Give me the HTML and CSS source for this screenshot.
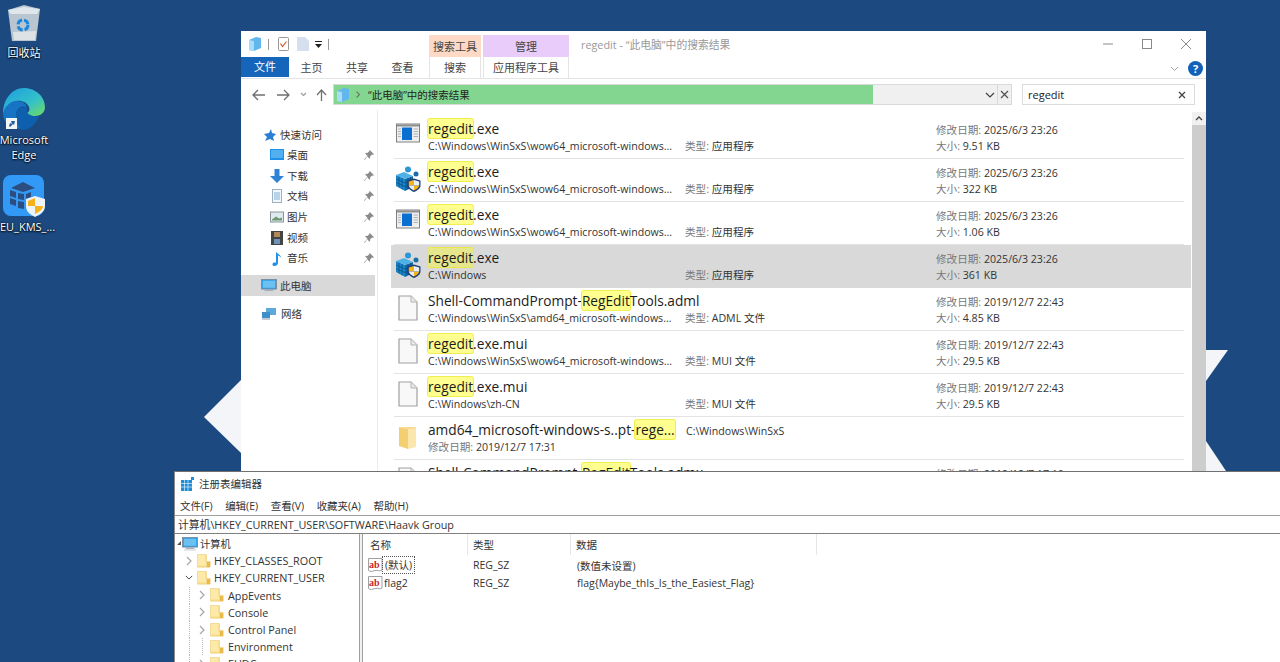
FILE: index.html
```html
<!DOCTYPE html>
<html lang="zh-CN">
<head>
<meta charset="utf-8">
<title>regedit</title>
<link rel="stylesheet" href="styles.css">
</head>
<body>
<svg width="0" height="0" class="defs">
  <defs>
    <symbol id="i-exe" viewBox="0 0 24 20"><rect x=".5" y="1" width="23" height="18" fill="#efefef" stroke="#808080"/><rect x="1" y="1.500" width="22" height="2" fill="#8f8f8f"/><rect x="6" y="4.500" width="10" height="12.500" fill="#0a6fd0"/><path d="M2 6h3M2 8.500h3M2 11h3M2 13.500h3M17.500 6h4.500M17.500 8.500h4.500M17.500 11h4.500M17.500 13.500h4.500" stroke="#a9b3bd"/></symbol>
    <symbol id="i-reg" viewBox="0 0 26 26"><path d="M1 9l9 4v12l-9-5z" fill="#1a85c8"/><path d="M10 13l8-3v11l-8 4z" fill="#1266a6"/><path d="M1 9l8-3 9 4-8 3z" fill="#4fb0e6"/><path d="M1 13l9 4 8-3M1 16.500l9 4 8-3M4 10.500v11M7 12v11M13 12v11M15.500 11v11" fill="none" stroke="#0b4a7c" stroke-width=".7"/><circle cx="13" cy="3.500" r="3" fill="#2a95d8"/><circle cx="21" cy="8" r="2.500" fill="#1a6ea8"/><path d="M19 12.500l6.500 2v5c0 3-3 5-6.500 6.500-3.500-1.500-6.500-3.500-6.500-6.500v-5z" fill="#1c3f78"/><path d="M19 14v5.500h-5.200v-4zM19 19.500h5.200c-.3 2.300-2.800 3.800-5.200 5z" fill="#f6b21a"/><path d="M19 14l5.200 1.500v4H19zM19 19.500v5c-2.400-1.200-4.900-2.700-5.200-5z" fill="#e8eef4"/></symbol>
    <symbol id="i-doc" viewBox="0 0 20 26"><path d="M1 1h12l6 6v18H1z" fill="#f8f8f8" stroke="#a0a0a0" stroke-width="1.200"/><path d="M13 1v6h6" fill="#e8e8e8" stroke="#b4b4b4"/></symbol>
    <symbol id="i-folder" viewBox="0 0 20 26"><path d="M1 3l9 2v20l-9-3z" fill="#f4cf72"/><path d="M10 3h8v20l-8 2z" fill="#fbe6ad"/><path d="M1 3h16l1 1-8 1z" fill="#f7d98d"/></symbol>
    <symbol id="i-yellow" viewBox="0 0 16 16"><path d="M1 1h10v14H1z" fill="#fbe08d"/><path d="M1 1h9v12H1z" fill="#fdeaa8"/><path d="M11 9h4v6h-4z" fill="#e9b949"/><path d="M.5 .5h10v8h4.500v6.500H.5z" fill="none" stroke="#e9c25f" stroke-width=".7"/></symbol>
    <symbol id="i-pc" viewBox="0 0 18 16"><rect x=".5" y=".5" width="17" height="11" fill="#2d9ee8" stroke="#7a8a99"/><rect x="2" y="2" width="14" height="8" fill="#6cc1f2"/><path d="M4 12h10v1.500H4z" fill="#9aa6b2"/><path d="M2 14h14v1.500H2z" fill="#d2d8dd"/></symbol>
    <symbol id="i-pin" viewBox="0 0 10 10"><path d="M6 0l4 4-1 .5-1-.3-2 2 .2 1.500-.7.700L3.200 6 .8 9.500 0 9.200 3.400 5.400 1.200 3.200 2 2.500l1.500.2 2-2-.3-1z" fill="#8a8a8a" transform="translate(0 .3)"/></symbol>
    <symbol id="i-ab" viewBox="0 0 16 16"><path d="M1.500 1.500h13.500v11.500c-2.500 2-4-.5-7 .5-3 1-4.500 1.500-6.500 0z" fill="#fff" stroke="#a0a0a0"/><text x="2" y="10.500" class="ab-text">ab</text></symbol>
    <symbol id="i-chev" viewBox="0 0 8 10"><path d="M2 1l4 4-4 4" fill="none" stroke="#a6a6a6" stroke-width="1.200"/></symbol>
    <symbol id="i-chev-d" viewBox="0 0 10 8"><path d="M1 2l4 4 4-4" fill="none" stroke="#404040" stroke-width="1.200"/></symbol>
  </defs>
</svg>

<div class="desktop">
  <svg class="wallpaper" viewBox="0 0 1280 662" width="1280" height="662"><path d="M204 417 241 380V453Z" fill="#f3f5f8"/><path d="M1206 350H1228L1206 381Z" fill="#f3f5f8"/><path d="M1206 441 1226 471H1206Z" fill="#f3f5f8"/></svg>

  <div class="desk-icon bin">
    <svg width="34" height="38" viewBox="0 0 34 38"><path d="M1 6 17 1l16 4-4 32H5z" fill="#b9c5cf"/><path d="M1 6l16-3 16 2-3 5H4z" fill="#dfe6ec"/><path d="M6 28l23-1-1 9H7z" fill="#dde2e6"/><circle cx="16" cy="21" r="5" fill="none" stroke="#1b88e0" stroke-width="3" stroke-dasharray="6 2"/></svg>
    <span>回收站</span>
  </div>
  <div class="desk-icon edge">
    <svg width="42" height="42" viewBox="0 0 42 42"><defs><linearGradient id="eg" x1="0" y1="0" x2="1" y2="1"><stop offset="0" stop-color="#1b9de2"/><stop offset=".6" stop-color="#35c1c8"/><stop offset="1" stop-color="#73dc5c"/></linearGradient></defs><path d="M21 0c12 0 21 9 21 19 0 6-5 9-10 9-5 0-8-2-8-3 2-1 3-3 2-6-2-5-8-7-13-6C7 14 2 20 0 26 0 11 9 0 21 0z" fill="url(#eg)"/><path d="M0 26c1-7 7-13 14-13 6 0 9 3 10 6-5-2-11 1-11 8 0 6 4 11 11 14C10 42 0 36 0 26z" fill="#1773c4"/><path d="M13 27c0-5 4-8 9-8 2 0 3 2 2 5 2 4 7 5 12 4-3 8-9 14-17 14-4-3-6-9-6-15z" fill="#0e5fae"/><rect x="3" y="30" width="11" height="11" fill="#f5f5f5"/><path d="M6 38l1-3 2 1-1-3h4l-1 4-1-1-3 3z" fill="#1f5f9c"/></svg>
    <span>Microsoft<br>Edge</span>
  </div>
  <div class="desk-icon kms">
    <svg width="42" height="42" viewBox="0 0 42 42"><rect width="41" height="41" rx="8" fill="#3399f7"/><g fill="#2c4d80"><path d="M8 13l12-6 12 6-12 4z"/><path d="M7 15l6 2v6l-6-2zM15 18l6 1v6l-6-1zM7 23l6 2v6l-6-2zM15 26l6 1v7l-6-1zM23 19l5-2v5l-5 2z"/></g><path d="M32 21l10 3v7c0 5-4 8-10 11-6-3-9-6-9-11v-7z" fill="#eef3f7"/><path d="M32 23v8h-7v-5zM32 31h8c-.5 4-4 6-8 8z" fill="#f6b21a"/></svg>
    <span>EU_KMS_...</span>
  </div>

  <section class="explorer">
    <header class="ex-title">
      <div class="qat">
        <svg width="12" height="14" viewBox="0 0 12 14"><path d="M0 3l7-3 5 1v10l-7 3-5-1z" fill="#61b6ee"/><path d="M0 3l5 1v10l-5-1z" fill="#a8dcf8"/></svg>
        <i class="qat-sep first"></i>
        <svg width="11" height="14" viewBox="0 0 11 14"><rect x=".5" y=".5" width="10" height="13" rx="1" fill="#fff" stroke="#999"/><path d="M2.500 6.500l2 3 4-5" fill="none" stroke="#d9552b" stroke-width="1.200"/></svg>
        <svg class="qat-doc" width="12" height="14" viewBox="0 0 12 14"><path d="M0 0h8l4 4v10H0z" fill="#d4e0ee"/></svg>
        <svg class="qat-arrow" width="7" height="7" viewBox="0 0 7 7"><path d="M0 0h7v1H0zM0 3h7L3.500 7z" fill="#222"/></svg>
        <i class="qat-sep last"></i>
      </div>
      <div class="ctx-heads">
        <div class="ctx search">搜索工具</div>
        <div class="ctx manage">管理</div>
      </div>
      <div class="win-title">regedit - “此电脑”中的搜索结果</div>
      <div class="win-btns">
        <svg width="10" height="10" viewBox="0 0 10 10"><path d="M0 5h10" stroke="#888" fill="none"/></svg>
        <svg width="10" height="10" viewBox="0 0 10 10"><rect x=".5" y=".5" width="9" height="9" fill="none" stroke="#888"/></svg>
        <svg width="10" height="10" viewBox="0 0 10 10"><path d="M0 0l10 10M10 0 0 10" stroke="#888" fill="none"/></svg>
      </div>
    </header>
    <nav class="ex-tabs">
      <div class="tab file">文件</div>
      <div class="tab t-home">主页</div>
      <div class="tab t-share">共享</div>
      <div class="tab t-view">查看</div>
      <div class="tab t-search">搜索</div>
      <div class="tab t-app">应用程序工具</div>
      <div class="tab-end">
        <svg width="9" height="6" viewBox="0 0 9 6"><path d="M1 1l3.500 3.500L8 1" fill="none" stroke="#aaa"/></svg>
        <span class="help">?</span>
      </div>
    </nav>
    <div class="ex-addr">
      <div class="nav-btns">
        <svg width="13" height="12" viewBox="0 0 13 12"><path d="M6 1 1 6l5 5M1 6h12" fill="none" stroke="#707070" stroke-width="1.300"/></svg>
        <svg width="13" height="12" viewBox="0 0 13 12"><path d="M7 1l5 5-5 5M12 6H0" fill="none" stroke="#707070" stroke-width="1.300"/></svg>
        <svg width="7" height="5" viewBox="0 0 7 5"><path d="M1 1l2.500 2.500L6 1" fill="none" stroke="#999" stroke-width="1.100"/></svg>
        <svg width="11" height="12" viewBox="0 0 11 12"><path d="M1 6l4.500-5L10 6M5.500 1v11" fill="none" stroke="#707070" stroke-width="1.300"/></svg>
      </div>
      <div class="addr-box">
        <div class="addr-progress">
          <svg width="14" height="14" viewBox="0 0 12 14"><path d="M0 3l7-3 5 1v10l-7 3-5-1z" fill="#61b6ee"/><path d="M0 3l5 1v10l-5-1z" fill="#a8dcf8"/></svg>
          <svg class="addr-chev" width="6" height="7" viewBox="0 0 8 10"><path d="M2 1l4 4-4 4" fill="none" stroke="#666" stroke-width="1.500"/></svg>
          <span>“此电脑”中的搜索结果</span>
        </div>
        <div class="addr-drop"><svg width="10" height="8" viewBox="0 0 10 8"><use href="#i-chev-d"/></svg></div>
      </div>
      <div class="addr-x"><svg width="9" height="9" viewBox="0 0 9 9"><path d="M1 1l7 7M8 1 1 8" stroke="#555" stroke-width="1.300" fill="none"/></svg></div>
      <div class="search-box"><span>regedit</span><svg width="8" height="8" viewBox="0 0 8 8"><path d="M1 1l6 6M7 1 1 7" stroke="#444" stroke-width="1.300" fill="none"/></svg></div>
    </div>

    <div class="ex-body">
      <aside class="side">
        <div class="side-item head quick"><svg width="12" height="12" viewBox="0 0 12 12"><path d="M7 0 8 4l4 1-3 3 1 4-4-2-5 2 2-4-3-3 5-1z" fill="#2a7fd5"/></svg><span>快速访问</span></div>
        <div class="side-item sub"><svg width="14" height="12" viewBox="0 0 14 12"><rect width="14" height="11" fill="#1e90e8"/><rect x="1" y="1" width="12" height="8" fill="#53b0f0"/></svg><span>桌面</span><svg class="pin" width="10" height="10"><use href="#i-pin"/></svg></div>
        <div class="side-item sub"><svg width="14" height="14" viewBox="0 0 14 14"><path d="M4.500 0h5v7H14l-7 7-7-7h4.500z" fill="#2f83d6"/></svg><span>下载</span><svg class="pin" width="10" height="10"><use href="#i-pin"/></svg></div>
        <div class="side-item sub"><svg width="14" height="14" viewBox="0 0 10 14"><rect x=".5" y=".5" width="9" height="13" fill="#f4f7fa" stroke="#9fb0c0"/><path d="M2 4h6M2 6h6M2 8h6M2 10h6" stroke="#7cb1de"/></svg><span>文档</span><svg class="pin" width="10" height="10"><use href="#i-pin"/></svg></div>
        <div class="side-item sub"><svg width="14" height="12" viewBox="0 0 14 11"><rect x=".5" y=".5" width="13" height="10" fill="#dfe9ee" stroke="#8a949c"/><path d="M2 8l4-3 3 2 3-1v3H2z" fill="#6e9a70"/></svg><span>图片</span><svg class="pin" width="10" height="10"><use href="#i-pin"/></svg></div>
        <div class="side-item sub"><svg width="14" height="14" viewBox="0 0 12 14"><rect width="12" height="14" fill="#444"/><rect x="3" y="1" width="6" height="5" fill="#b08a5a"/><rect x="3" y="8" width="6" height="5" fill="#6d93b8"/></svg><span>视频</span><svg class="pin" width="10" height="10"><use href="#i-pin"/></svg></div>
        <div class="side-item sub"><svg width="14" height="15" viewBox="0 0 10 15"><path d="M4 0c0 3 5 3 5 7-1-2-2-2-3-2.500V12c0 2-2 3-4 3s-2-3 0-3.500c.8-.2 1.500 0 2 .2z" fill="#1e90e8"/></svg><span>音乐</span><svg class="pin" width="10" height="10"><use href="#i-pin"/></svg></div>
        <div class="side-item head pc"><svg width="16" height="14"><use href="#i-pc"/></svg><span>此电脑</span></div>
        <div class="side-item head net"><svg width="14" height="12" viewBox="0 0 14 12"><rect x="4" y="0" width="10" height="7" fill="#5da9dc"/><rect x="0" y="4" width="8" height="6" fill="#3f8fcb"/><path d="M0 11h8" stroke="#8a99a6"/></svg><span>网络</span></div>
      </aside>

      <main class="results">
        <div class="row"><svg class="ric" width="24" height="20"><use href="#i-exe"/></svg><div class="c-main"><div class="name"><mark>regedit</mark>.exe</div><div class="path">C:\Windows\WinSxS\wow64_microsoft-windows...</div></div><div class="c-type"><b>类型:</b> 应用程序</div><div class="c-meta"><div><b>修改日期:</b> 2025/6/3 23:26</div><div><b>大小:</b> 9.51 KB</div></div></div>
        <div class="row"><svg class="ric" width="26" height="26"><use href="#i-reg"/></svg><div class="c-main"><div class="name"><mark>regedit</mark>.exe</div><div class="path">C:\Windows\WinSxS\wow64_microsoft-windows...</div></div><div class="c-type"><b>类型:</b> 应用程序</div><div class="c-meta"><div><b>修改日期:</b> 2025/6/3 23:26</div><div><b>大小:</b> 322 KB</div></div></div>
        <div class="row"><svg class="ric" width="24" height="20"><use href="#i-exe"/></svg><div class="c-main"><div class="name"><mark>regedit</mark>.exe</div><div class="path">C:\Windows\WinSxS\wow64_microsoft-windows...</div></div><div class="c-type"><b>类型:</b> 应用程序</div><div class="c-meta"><div><b>修改日期:</b> 2025/6/3 23:26</div><div><b>大小:</b> 1.06 KB</div></div></div>
        <div class="row selected"><svg class="ric" width="26" height="26"><use href="#i-reg"/></svg><div class="c-main"><div class="name"><mark>regedit</mark>.exe</div><div class="path">C:\Windows</div></div><div class="c-type"><b>类型:</b> 应用程序</div><div class="c-meta"><div><b>修改日期:</b> 2025/6/3 23:26</div><div><b>大小:</b> 361 KB</div></div></div>
        <div class="row"><svg class="ric" width="20" height="26"><use href="#i-doc"/></svg><div class="c-main"><div class="name">Shell-CommandPrompt-<mark>RegEdit</mark>Tools.adml</div><div class="path">C:\Windows\WinSxS\amd64_microsoft-windows...</div></div><div class="c-type"><b>类型:</b> ADML 文件</div><div class="c-meta"><div><b>修改日期:</b> 2019/12/7 22:43</div><div><b>大小:</b> 4.85 KB</div></div></div>
        <div class="row"><svg class="ric" width="20" height="26"><use href="#i-doc"/></svg><div class="c-main"><div class="name"><mark>regedit</mark>.exe.mui</div><div class="path">C:\Windows\WinSxS\wow64_microsoft-windows...</div></div><div class="c-type"><b>类型:</b> MUI 文件</div><div class="c-meta"><div><b>修改日期:</b> 2019/12/7 22:43</div><div><b>大小:</b> 29.5 KB</div></div></div>
        <div class="row"><svg class="ric" width="20" height="26"><use href="#i-doc"/></svg><div class="c-main"><div class="name"><mark>regedit</mark>.exe.mui</div><div class="path">C:\Windows\zh-CN</div></div><div class="c-type"><b>类型:</b> MUI 文件</div><div class="c-meta"><div><b>修改日期:</b> 2019/12/7 22:43</div><div><b>大小:</b> 29.5 KB</div></div></div>
        <div class="row folder"><svg class="ric" width="20" height="26"><use href="#i-folder"/></svg><div class="c-main wide"><div class="name">amd64_microsoft-windows-s..pt-<mark>rege...</mark></div><div class="path"><b>修改日期:</b> 2019/12/7 17:31</div></div><div class="c-loc">C:\Windows\WinSxS</div></div>
        <div class="row"><svg class="ric" width="20" height="26"><use href="#i-doc"/></svg><div class="c-main"><div class="name">Shell-CommandPrompt-<mark>RegEdit</mark>Tools.admx</div><div class="path"></div></div><div class="c-type"></div><div class="c-meta"><div><b>修改日期:</b> 2019/12/7 17:10</div></div></div>
      </main>
      <div class="scrollbar"><div class="sb-up"><svg width="8" height="5" viewBox="0 0 8 5"><path d="M1 4l3-3 3 3" fill="none" stroke="#444" stroke-width="1.300"/></svg></div><div class="sb-thumb"></div></div>
    </div>
  </section>

  <section class="regedit">
    <header class="re-title">
      <svg width="14" height="14" viewBox="0 0 14 14"><rect y="3" width="11" height="11" fill="#1c8dd6"/><path d="M0 6.500h11M0 10h11M3.500 3v11M7 3v11" stroke="#fff" stroke-width=".6"/><rect x="10" y="0" width="3" height="3" fill="#1c8dd6"/></svg>
      <span>注册表编辑器</span>
    </header>
    <nav class="re-menu"><span>文件(F)</span><span>编辑(E)</span><span>查看(V)</span><span>收藏夹(A)</span><span>帮助(H)</span></nav>
    <div class="re-path">计算机\HKEY_CURRENT_USER\SOFTWARE\Haavk Group</div>
    <div class="re-body">
      <div class="tree">
        <div class="node n0"><svg width="5" height="5" viewBox="0 0 5 5"><path d="M4 0v4H0z" fill="#555"/></svg><svg width="16" height="14"><use href="#i-pc"/></svg><span>计算机</span></div>
        <div class="node n1"><svg width="8" height="10"><use href="#i-chev"/></svg><svg width="14" height="14"><use href="#i-yellow"/></svg><span>HKEY_CLASSES_ROOT</span></div>
        <div class="node n1"><svg width="8" height="7"><use href="#i-chev-d"/></svg><svg width="14" height="14"><use href="#i-yellow"/></svg><span>HKEY_CURRENT_USER</span></div>
        <div class="node n2"><svg width="8" height="10"><use href="#i-chev"/></svg><svg width="14" height="14"><use href="#i-yellow"/></svg><span>AppEvents</span></div>
        <div class="node n2"><svg width="8" height="10"><use href="#i-chev"/></svg><svg width="14" height="14"><use href="#i-yellow"/></svg><span>Console</span></div>
        <div class="node n2"><svg width="8" height="10"><use href="#i-chev"/></svg><svg width="14" height="14"><use href="#i-yellow"/></svg><span>Control Panel</span></div>
        <div class="node n2 leaf"><i class="blank"></i><svg width="14" height="14"><use href="#i-yellow"/></svg><span>Environment</span></div>
        <div class="node n2"><svg width="8" height="10"><use href="#i-chev"/></svg><svg width="14" height="14"><use href="#i-yellow"/></svg><span>EUDC</span></div>
      </div>
      <div class="split"></div>
      <div class="values">
        <div class="v-head"><div class="col c1">名称</div><div class="col c2">类型</div><div class="col c3">数据</div></div>
        <div class="v-row"><div class="col c1"><svg width="16" height="16"><use href="#i-ab"/></svg><span class="focus">(默认)</span></div><div class="col c2">REG_SZ</div><div class="col c3">(数值未设置)</div></div>
        <div class="v-row"><div class="col c1"><svg width="16" height="16"><use href="#i-ab"/></svg><span class="plain">flag2</span></div><div class="col c2">REG_SZ</div><div class="col c3">flag{Maybe_thIs_Is_the_Easiest_Flag}</div></div>
      </div>
    </div>
  </section>
</div>
</body>
</html>
```

FILE: styles.css
```css
* { box-sizing: border-box; }
html, body { margin: 0; padding: 0; width: 1280px; height: 662px; overflow: hidden; }
body { font-family: "Open Sans", "Noto Sans CJK SC", sans-serif; font-size: 11px; color: #222; }
.defs { position: absolute; }
svg { display: block; flex: none; }
.ab-text { font: bold 10px "Liberation Serif", serif; fill: #c8281e; }

.desktop { position: relative; width: 1280px; height: 662px; background: #1c4a80; overflow: hidden; }
.wallpaper { position: absolute; left: 0; top: 0; }

.desk-icon { position: absolute; width: 60px; display: flex; flex-direction: column; align-items: center; color: #fff; font-size: 11px; line-height: 15px; text-align: center; text-shadow: 0 1px 2px #000, 0 0 2px #000; white-space: nowrap; }
.bin { left: -6px; top: 4px; gap: 3px; }
.edge { left: -6px; top: 88px; gap: 2px; }
.kms { left: -6px; top: 175px; gap: 2px; }
.kms span { margin-left: 7px; }

.explorer { position: absolute; left: 241px; top: 31px; width: 965px; height: 440px; background: #fff; display: flex; flex-direction: column; }
.ex-title { height: 26px; display: flex; align-items: center; position: relative; }
.qat { display: flex; align-items: center; margin-left: 8px; width: 180px; }
.qat-sep { width: 1px; height: 11px; background: #999; }
.qat-sep.first { margin: 0 9px 0 7px; }
.qat-sep.last { margin-left: 6px; }
.qat-doc { margin-left: 8px; }
.qat-arrow { margin-left: 6px; }
.ctx-heads { display: flex; gap: 2px; align-self: flex-end; margin-bottom: -1px; }
.ctx { height: 23px; font-size: 11px; line-height: 23px; text-align: center; color: #444; }
.ctx.search { width: 52px; background: #fdd9c6; }
.ctx.manage { width: 86px; background: #e9ccf9; }
.win-title { margin-left: 12px; font-size: 10.800px; color: #999; }
.win-btns { margin-left: auto; display: flex; gap: 29px; margin-right: 15px; }

.ex-tabs { height: 22px; display: flex; align-items: flex-start; font-size: 11px; color: #444; border-bottom: 1px solid #e4e4e4; position: relative; }
.tab { line-height: 21px; text-align: center; }
.file { width: 48px; height: 20px; line-height: 20px; background: #1565ba; color: #fff; }
.t-home { width: 45px; }
.t-share { width: 46px; }
.t-view { width: 45px; }
.t-search { width: 52px; margin-left: 4px; border-left: 1px solid #e4e4e4; border-right: 1px solid #e4e4e4; height: 21px; background: #fff; }
.t-app { width: 86px; margin-left: 2px; border-left: 1px solid #e4e4e4; border-right: 1px solid #e4e4e4; height: 21px; background: #fff; }
.tab-end { margin-left: auto; display: flex; align-items: center; gap: 9px; padding: 4px 3px 0 0; }
.help { width: 15px; height: 15px; border-radius: 50%; background: #0f62b8; color: #fff; font: bold 11px/15px "Open Sans", sans-serif; text-align: center; }

.ex-addr { height: 31px; display: flex; align-items: center; }
.nav-btns { width: 92px; padding-left: 11px; display: flex; align-items: center; gap: 12px; }
.nav-btns svg:nth-child(3) { margin: 0 -3px 0 -2px; }
.addr-box { width: 665px; height: 21px; background: #f0f0f0; border: 1px solid #d9d9d9; display: flex; }
.addr-progress { width: 539px; height: 19px; background: #83d68f; display: flex; align-items: center; padding-left: 2px; gap: 5px; color: #222; font-size: 10.500px; }
.addr-chev { margin-right: 2px; }
.addr-drop { margin-left: auto; width: 14px; display: flex; align-items: center; justify-content: center; }
.addr-x { width: 14px; height: 21px; background: #f0f0f0; border: 1px solid #d9d9d9; border-left: 0; display: flex; align-items: center; justify-content: center; }
.search-box { width: 173px; height: 21px; margin-left: 10px; border: 1px solid #dcdcdc; display: flex; align-items: center; justify-content: space-between; padding: 0 8px 0 5px; font-size: 11px; }

.ex-body { flex: 1; display: flex; min-height: 0; overflow: hidden; }
.side { width: 137px; flex: none; border-right: 1px solid #ececec; display: flex; flex-direction: column; color: #333; font-size: 10.500px; }
.side-item { display: flex; align-items: center; height: 21px; flex: none; }
.side-item span { line-height: 14px; }
.head.quick { margin-top: 14px; padding-left: 23px; gap: 4px; }
.sub { height: 20.600px; padding-left: 29px; gap: 3px; }
.sub .pin { margin-left: auto; margin-right: 3px; }
.head.pc { margin-top: 6.500px; padding-left: 20px; gap: 3px; background: #d9d9d9; width: 134px; }
.head.net { margin-top: 7px; padding-left: 21px; gap: 5px; }

.results { width: 800px; flex: none; margin-left: 13px; padding-top: 6px; }
.row { height: 43px; padding: 0 0 0 3px; display: flex; position: relative; align-items: stretch; }
.row::after { content: ""; position: absolute; left: 3px; right: 7px; bottom: 0; height: 1px; background: #e3e3e3; }
.row.selected { background: #d9d9d9; }
.row.selected::after { display: none; }
.row.selected mark { background: #e6e68c; border-color: #e8e84a; }
.ric { align-self: flex-start; margin-top: 7px; margin-left: 1px; width: 26px; }
.c-main { width: 257px; margin-left: 7px; flex: none; }
.c-main.wide { width: 258px; }
.name { font-size: 13.700px; line-height: 18px; margin-top: 4px; color: #1c1c1c; white-space: nowrap; }
.path { font-size: 10.600px; line-height: 15px; margin-top: 1px; white-space: nowrap; color: #333; }
mark { background: #ffff90; border: 1px solid #f0ee50; border-radius: 3px; color: inherit; padding: 0; margin: 0 -1px; }
b { font-weight: 400; color: #777; }
.c-type { width: 251px; flex: none; padding-top: 23px; font-size: 10.600px; line-height: 15px; color: #333; white-space: nowrap; }
.c-meta { padding-top: 7px; font-size: 10.600px; line-height: 15px; display: flex; flex-direction: column; gap: 1px; color: #333; white-space: nowrap; }
.c-loc { padding-top: 7px; font-size: 10.600px; line-height: 15px; color: #333; }

.scrollbar { width: 14px; margin-left: 1px; background: #cdcdcd; flex: none; margin-top: 2px; }
.sb-up { height: 13px; background: #f0f0f0; display: flex; align-items: center; justify-content: center; }

.regedit { position: absolute; left: 174px; top: 471px; width: 1106px; height: 191px; background: #fff; border-top: 1px solid #707070; border-left: 1px solid #8a8a8a; display: flex; flex-direction: column; }
.re-title { height: 23px; flex: none; display: flex; align-items: center; gap: 4px; padding-left: 6px; font-size: 10.500px; color: #333; }
.re-menu { height: 20px; flex: none; display: flex; gap: 12.500px; padding-left: 5px; align-items: center; font-size: 10.500px; color: #333; }
.re-path { height: 19px; flex: none; border-top: 1px solid #a0a0a0; border-bottom: 1px solid #808080; padding-left: 3px; font-size: 10.800px; line-height: 17px; color: #333; white-space: nowrap; }
.re-body { flex: 1; display: flex; min-height: 0; overflow: hidden; }
.tree { width: 185px; flex: none; border-right: 1px solid #a0a0a0; padding: 1px 0 0 1px; }
.node { height: 17.200px; display: flex; align-items: center; font-size: 10.800px; color: #333; white-space: nowrap; }
.node.n0 { padding-left: 1px; }
.node.n0 span { margin-left: 2px; font-size: 10.300px; }
.node.n1 { padding-left: 9px; gap: 4px; }
.node.n1 span { margin-left: -1px; }
.node.n2 { padding-left: 22px; gap: 4px; background: repeating-linear-gradient(#bbb 0 1px, transparent 1px 2px) 13px 0 / 1px 100% no-repeat; }
.blank { width: 8px; height: 17px; background: repeating-linear-gradient(#bbb 0 1px, transparent 1px 2px) 4px 0 / 1px 100% no-repeat; }
.split { width: 3px; background: #f0f0f0; border-right: 1px solid #a0a0a0; flex: none; }
.values { flex: 1; font-size: 10.500px; color: #333; padding-left: 2px; }
.v-head, .v-row { display: flex; height: 18px; align-items: center; white-space: nowrap; }
.v-head { height: 22px; align-items: flex-start; }
.v-head .col { height: 21px; line-height: 20px; border-right: 1px solid #e6e6e6; padding-left: 5px; }
.col { flex: none; display: flex; align-items: center; }
.c1 { width: 103px; }
.c2 { width: 103px; padding-left: 5px; }
.c3 { width: 246px; padding-left: 6px; }
.v-row .c1 { padding-left: 2px; }
.focus { outline: 1px dotted #555; padding: 0 2px; line-height: 16px; }
.plain { padding-left: 1px; }
```
